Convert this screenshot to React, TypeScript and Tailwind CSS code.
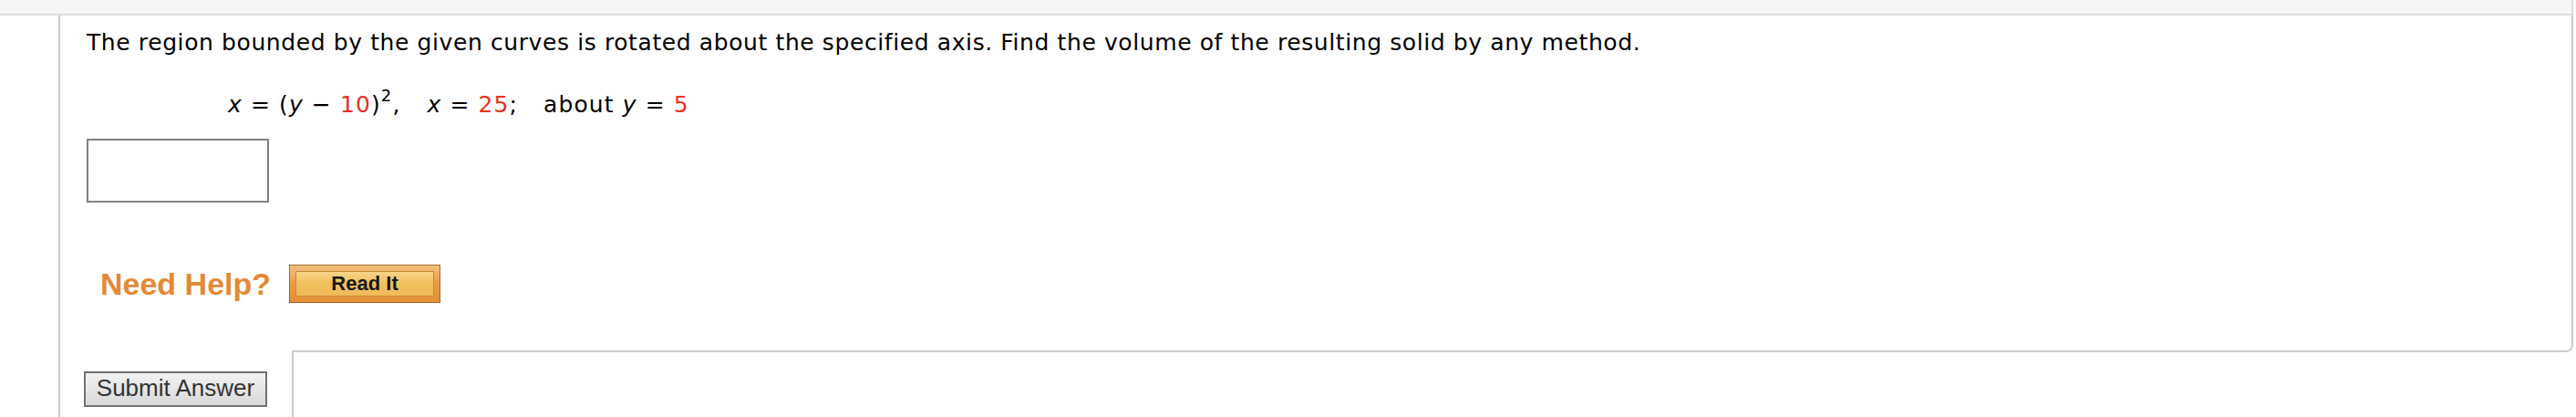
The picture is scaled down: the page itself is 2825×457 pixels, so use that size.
export default function App() {
  const red = "text-[#e8321f]";
  return (
    <div className="w-[2822px] h-[457px] bg-white overflow-hidden flex flex-col font-['DejaVu_Sans',sans-serif] text-black">
      <div className="h-[17px] shrink-0 bg-[#f6f6f6] border-b-2 border-r-2 border-[#dddddd]" />
      <div className="flex flex-1">
        <div className="w-[64px] shrink-0" />
        <div className="flex-1 flex flex-col border-l-2 border-[#cccccc]">
          <div className="border-r-2 border-[#cccccc] pt-[16px] pl-[29px]">
            <p className="text-[25px] leading-[28px] tracking-[0.6px]">
              The region bounded by the given curves is rotated about the specified axis. Find the volume of the resulting solid by any method.
            </p>
            <div className="mt-[40px] pl-[155px] text-[25px] leading-[28px] tracking-[1.1px] whitespace-nowrap">
              <span className="italic">x</span> = (<span className="italic">y</span> − <span className={red}>10</span>)
              <span className="text-[18px] relative top-[-12px] leading-none">2</span>,
              <span className="inline-block w-[29px]" />
              <span className="italic">x</span> = <span className={red}>25</span>;
              <span className="inline-block w-[28px]" />
              about <span className="italic">y</span> = <span className={red}>5</span>
            </div>
            <div className="mt-[23px] w-[200px] h-[70px] border-2 border-[#808080] bg-white" />
            <div className="mt-[68px] flex items-center">
              <span className="ml-[15px] font-['Liberation_Sans',Arial,sans-serif] font-bold text-[34px] leading-[37px] text-[#e38a38]">
                Need Help?
              </span>
              <button className="ml-[20px] w-[166px] h-[42px] p-[6px] border border-[#a4692a] bg-gradient-to-b from-[#f3c27c] via-[#ea9a3e] to-[#e38f36]">
                <div className="w-full h-full border border-[#c4883a] bg-gradient-to-b from-[#f7d488] via-[#f2bf5d] to-[#f0bb58] flex items-center justify-center">
                  <span className="font-['Liberation_Sans',Arial,sans-serif] font-bold text-[22px] leading-none text-[#161616]">
                    Read It
                  </span>
                </div>
              </button>
            </div>
          </div>
          <div className="flex shrink-0">
            <div className="w-[254px] shrink-0" />
            <div className="flex-1 h-[54px] border-r-2 border-b-2 border-[#cccccc] rounded-br-[8px]" />
          </div>
          <div className="flex flex-1">
            <div className="w-[254px] shrink-0 pt-[21px] pl-[26px]">
              <button className="w-[201px] h-[39px] border-2 border-[#707070] bg-gradient-to-b from-[#f2f2f2] to-[#d9d9d9] flex items-center justify-center pb-[3px]">
                <span className="font-['Liberation_Sans',Arial,sans-serif] text-[26px] leading-none text-[#333333]">
                  Submit Answer
                </span>
              </button>
            </div>
            <div className="flex-1 border-l-2 border-[#cccccc]" />
          </div>
        </div>
      </div>
    </div>
  );
}
